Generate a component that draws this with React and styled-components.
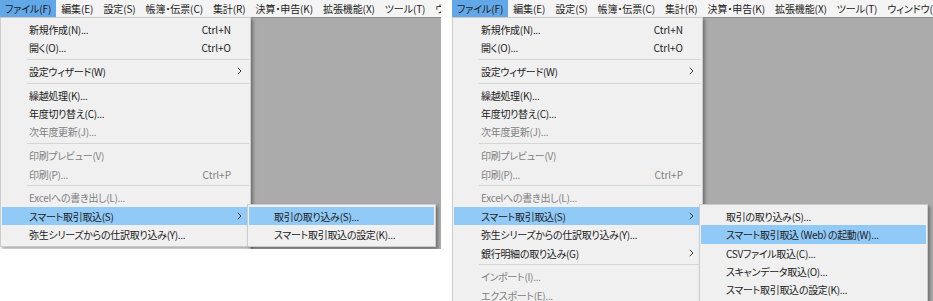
import React from "react";
import styled, { createGlobalStyle } from "styled-components";

const GlobalStyle = createGlobalStyle`
  html, body {
    margin: 0;
    padding: 0;
    background: #ffffff;
  }
  body {
    font-family: "Noto Sans CJK JP", "Noto Sans", sans-serif;
    font-feature-settings: "palt";
  }
`;

const Page = styled.div`
  display: flex;
  gap: 11px;
  width: 933px;
  height: 301px;
  overflow: hidden;
  background: #ffffff;
`;

const Window = styled.div`
  display: flex;
  flex-direction: column;
  flex-shrink: 0;
  width: ${(p) => p.$width}px;
  height: ${(p) => p.$height}px;
  overflow: hidden;
`;

const MenuBar = styled.div`
  display: flex;
  flex-shrink: 0;
  height: 17px;
  background: #f4f4f4;
  white-space: nowrap;
`;

const BarItem = styled.div`
  flex-shrink: 0;
  padding: 0 5px;
  line-height: 17px;
  font-size: 10px;
  letter-spacing: -0.1px;
  color: #1b1b1b;
  background: ${(p) => (p.$open ? "#62a8e8" : "transparent")};
`;

const Body = styled.div`
  display: flex;
  flex: 1;
  min-height: 0;
`;

const DropMenu = styled.div`
  position: relative;
  z-index: 1;
  flex-shrink: 0;
  align-self: flex-start;
  box-sizing: border-box;
  width: ${(p) => p.$width}px;
  padding: 2px 0;
  background: #f0f0f0;
  border: 1px solid #cccccc;
  box-shadow: 2px 2px 3px rgba(0, 0, 0, 0.35);
`;

const SubMenu = styled(DropMenu)`
  position: absolute;
  z-index: 2;
  top: -3px;
  left: calc(100% - 2px);
`;

const Row = styled.div`
  position: relative;
  display: grid;
  grid-template-columns: 1fr auto 18px;
  align-items: center;
  height: 18.4px;
  margin: 0 1px;
  padding-left: ${(p) => p.$indent}px;
  font-size: 10px;
  letter-spacing: -0.3px;
  white-space: nowrap;
  color: ${(p) => (p.$disabled ? "#808080" : "#1b1b1b")};
  background: ${(p) => (p.$active ? "#91c9f7" : "transparent")};
`;

const Shortcut = styled.span`
  text-align: right;
  letter-spacing: 0;
`;

const Arrow = styled.span`
  display: flex;
  align-items: center;
  padding-left: 6px;
`;

const Separator = styled.div`
  height: 1px;
  margin: 2px 1px 2.4px 26px;
  background: #d5d5d5;
`;

const Workspace = styled.div`
  flex: 1;
  background: #ababab;
  border-top: 1px solid #8e8e8e;
`;

const barItems = [
  "ファイル(F)",
  "編集(E)",
  "設定(S)",
  "帳簿・伝票(C)",
  "集計(R)",
  "決算・申告(K)",
  "拡張機能(X)",
  "ツール(T)",
  "ウィンドウ(W)",
];

const baseItems = [
  { label: "新規作成(N)...", key: "Ctrl+N" },
  { label: "開く(O)...", key: "Ctrl+O" },
  { sep: true },
  { label: "設定ウィザード(W)", sub: true },
  { sep: true },
  { label: "繰越処理(K)..." },
  { label: "年度切り替え(C)..." },
  { label: "次年度更新(J)...", disabled: true },
  { sep: true },
  { label: "印刷プレビュー(V)", disabled: true },
  { label: "印刷(P)...", key: "Ctrl+P", disabled: true },
  { sep: true },
  { label: "Excelへの書き出し(L)...", disabled: true },
  { label: "スマート取引取込(S)", sub: true, open: true },
  { label: "弥生シリーズからの仕訳取り込み(Y)..." },
];

const extraItems = [
  { label: "銀行明細の取り込み(G)", sub: true },
  { sep: true },
  { label: "インポート(I)...", disabled: true },
  { label: "エクスポート(E)...", disabled: true },
];

const smartLeft = [
  { label: "取引の取り込み(S)...", active: true },
  { label: "スマート取引取込の設定(K)..." },
];

const smartRight = [
  { label: "取引の取り込み(S)..." },
  { label: "スマート取引取込（Web）の起動(W)...", active: true },
  { label: "CSVファイル取込(C)..." },
  { label: "スキャンデータ取込(O)..." },
  { label: "スマート取引取込の設定(K)..." },
];

function Chevron() {
  return (
    <svg width="5" height="8" viewBox="0 0 5 8">
      <polyline points="0.8,0.8 4,4 0.8,7.2" fill="none" stroke="#3a3a3a" strokeWidth="1" />
    </svg>
  );
}

function MenuRows({ items, indent, children }) {
  return items.map((item, i) =>
    item.sep ? (
      <Separator key={i} />
    ) : (
      <Row
        key={i}
        $indent={indent}
        $disabled={item.disabled}
        $active={item.active || item.open}
      >
        <span>{item.label}</span>
        <Shortcut>{item.key}</Shortcut>
        <Arrow>{item.sub && <Chevron />}</Arrow>
        {item.open && children}
      </Row>
    )
  );
}

function AppWindow({ width, height, items, subItems, subWidth }) {
  return (
    <Window $width={width} $height={height}>
      <MenuBar>
        {barItems.map((b, i) => (
          <BarItem key={b} $open={i === 0}>
            {b}
          </BarItem>
        ))}
      </MenuBar>
      <Body>
        <DropMenu $width={251}>
          <MenuRows items={items} indent={27}>
            <SubMenu $width={subWidth}>
              <MenuRows items={subItems} indent={25} />
            </SubMenu>
          </MenuRows>
        </DropMenu>
        <Workspace />
      </Body>
    </Window>
  );
}

export default function App() {
  return (
    <>
      <GlobalStyle />
      <Page>
        <AppWindow
          width={441}
          height={249}
          items={baseItems}
          subItems={smartLeft}
          subWidth={189}
        />
        <AppWindow
          width={481}
          height={301}
          items={[...baseItems, ...extraItems]}
          subItems={smartRight}
          subWidth={229}
        />
      </Page>
    </>
  );
}
